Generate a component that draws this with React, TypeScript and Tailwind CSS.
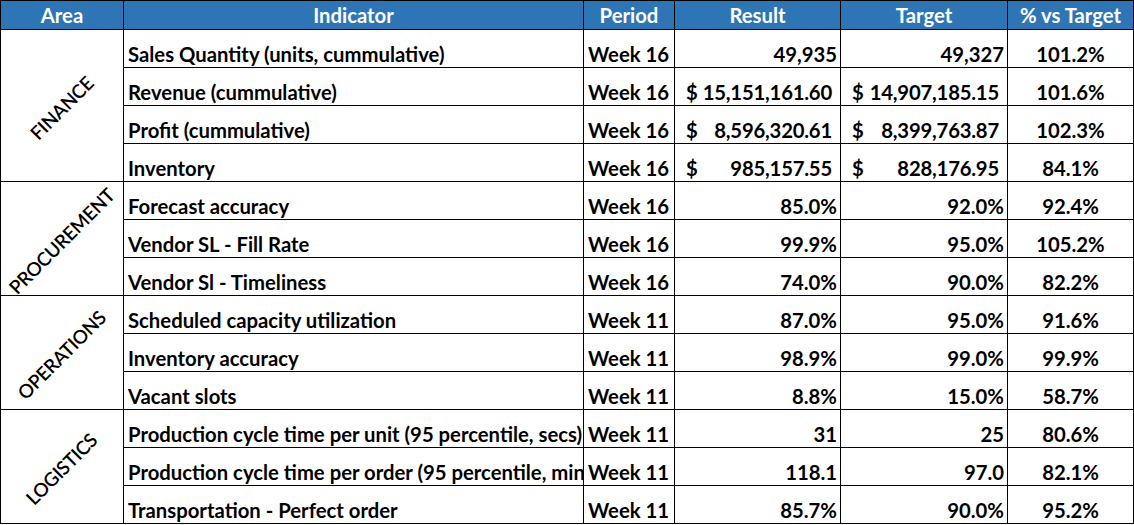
import React from "react";

type Row = {
  ind: string;
  period: string;
  result: string;
  target: string;
  pct: string;
  cur?: boolean;
};

const groups: { area: string; rows: Row[] }[] = [
  {
    area: "FINANCE",
    rows: [
      { ind: "Sales Quantity (units, cummulative)", period: "Week 16", result: "49,935", target: "49,327", pct: "101.2%" },
      { ind: "Revenue (cummulative)", period: "Week 16", result: "15,151,161.60", target: "14,907,185.15", pct: "101.6%", cur: true },
      { ind: "Profit (cummulative)", period: "Week 16", result: "8,596,320.61", target: "8,399,763.87", pct: "102.3%", cur: true },
      { ind: "Inventory", period: "Week 16", result: "985,157.55", target: "828,176.95", pct: "84.1%", cur: true },
    ],
  },
  {
    area: "PROCUREMENT",
    rows: [
      { ind: "Forecast accuracy", period: "Week 16", result: "85.0%", target: "92.0%", pct: "92.4%" },
      { ind: "Vendor SL - Fill Rate", period: "Week 16", result: "99.9%", target: "95.0%", pct: "105.2%" },
      { ind: "Vendor Sl - Timeliness", period: "Week 16", result: "74.0%", target: "90.0%", pct: "82.2%" },
    ],
  },
  {
    area: "OPERATIONS",
    rows: [
      { ind: "Scheduled capacity utilization", period: "Week 11", result: "87.0%", target: "95.0%", pct: "91.6%" },
      { ind: "Inventory accuracy", period: "Week 11", result: "98.9%", target: "99.0%", pct: "99.9%" },
      { ind: "Vacant slots", period: "Week 11", result: "8.8%", target: "15.0%", pct: "58.7%" },
    ],
  },
  {
    area: "LOGISTICS",
    rows: [
      { ind: "Production cycle time per unit (95 percentile, secs)", period: "Week 11", result: "31", target: "25", pct: "80.6%" },
      { ind: "Production cycle time per order (95 percentile, mins)", period: "Week 11", result: "118.1", target: "97.0", pct: "82.1%" },
      { ind: "Transportation - Perfect order", period: "Week 11", result: "85.7%", target: "90.0%", pct: "95.2%" },
    ],
  },
];

function Money({ v, cur }: { v: string; cur?: boolean }) {
  if (!cur) {
    return <div className="flex justify-end pr-[3px]">{v}</div>;
  }
  return (
    <div className="flex justify-between pl-[11px] pr-[8px]">
      <span>$</span>
      <span className="tracking-[-0.2px]">{v}</span>
    </div>
  );
}

export default function App() {
  const cell = "border border-black h-[38px] p-0 align-bottom pb-[1px] leading-[24px] overflow-hidden whitespace-nowrap";
  return (
    <div
      className="w-[1134px] h-[525px] bg-white overflow-hidden"
      style={{ fontFamily: "Lato, 'Liberation Sans', sans-serif" }}
    >
      <table className="table-fixed border-collapse w-[1133px] text-[20.3px] font-bold text-black">
        <colgroup>
          <col className="w-[123px]" />
          <col className="w-[460px]" />
          <col className="w-[91px]" />
          <col className="w-[166px]" />
          <col className="w-[167px]" />
          <col className="w-[126px]" />
        </colgroup>
        <thead>
          <tr className="bg-[#2e75b6] text-white">
            {["Area", "Indicator", "Period", "Result", "Target", "% vs Target"].map((h) => (
              <th key={h} className="border border-black h-[29px] p-0 text-center font-bold leading-[24px] align-middle whitespace-nowrap">
                {h}
              </th>
            ))}
          </tr>
        </thead>
        <tbody>
          {groups.map((g) =>
            g.rows.map((r, i) => (
              <tr key={r.ind}>
                {i === 0 && (
                  <td rowSpan={g.rows.length} className="border border-black p-0 align-middle">
                    <div className="flex items-center justify-center pt-[6px]">
                      <span className="inline-block -rotate-45 whitespace-nowrap font-semibold text-[19px] tracking-[-0.3px]">
                        {g.area}
                      </span>
                    </div>
                  </td>
                )}
                <td className={`${cell} pl-[4px]`}>{r.ind}</td>
                <td className={`${cell} pl-[4px]`}>{r.period}</td>
                <td className={cell}>
                  <Money v={r.result} cur={r.cur} />
                </td>
                <td className={cell}>
                  <Money v={r.target} cur={r.cur} />
                </td>
                <td className={`${cell} text-center`}>{r.pct}</td>
              </tr>
            ))
          )}
        </tbody>
      </table>
    </div>
  );
}
